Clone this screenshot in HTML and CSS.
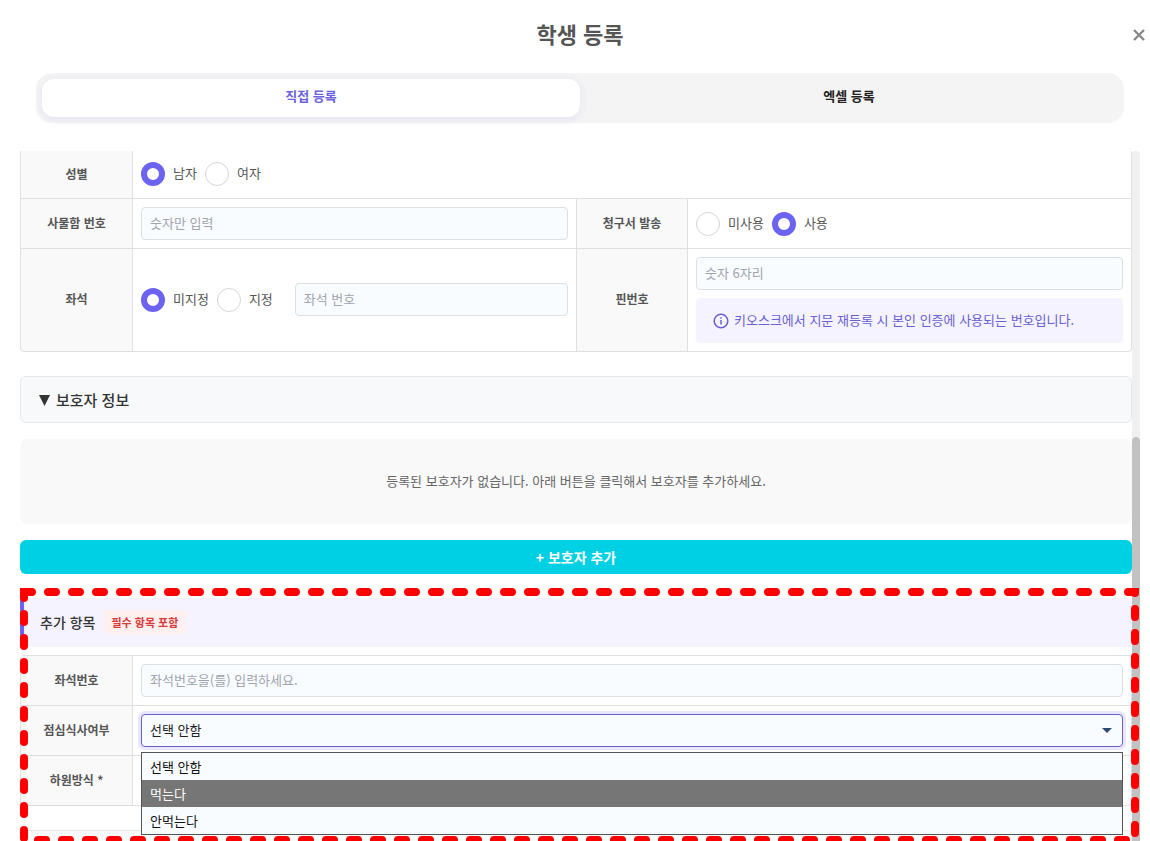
FILE: index.html
```html
<!DOCTYPE html>
<html lang="ko">
<head>
<meta charset="utf-8">
<meta name="viewport" content="width=device-width, initial-scale=1">
<title>학생 등록</title>
<link rel="stylesheet" href="styles.css">
</head>
<body>
<main class="modal">
  <header class="modal-header">
    <h1 class="modal-title">학생 등록</h1>
    <button class="close" type="button" aria-label="닫기">
      <svg width="12" height="12" viewBox="0 0 12 12"><path d="M1 1L11 11M11 1L1 11" stroke="#888" stroke-width="2.4" fill="none"/></svg>
    </button>
  </header>
  <div class="tabs" role="tablist">
    <button class="tab tab-active" type="button" role="tab" aria-selected="true">직접 등록</button>
    <button class="tab" type="button" role="tab" aria-selected="false">엑셀 등록</button>
  </div>
  <div class="scroll-area">
    <form class="content">
      <table class="form-table form-table-continued">
        <colgroup><col class="col-label"><col><col class="col-label-inner"><col></colgroup>
        <tr class="first-row">
          <th scope="row">성별</th>
          <td colspan="3">
            <div class="choices">
              <label class="choice"><input type="radio" name="gender" checked><span>남자</span></label>
              <label class="choice"><input type="radio" name="gender"><span>여자</span></label>
            </div>
          </td>
        </tr>
        <tr>
          <th scope="row"><label for="locker">사물함 번호</label></th>
          <td><input class="field" id="locker" type="text" placeholder="숫자만 입력"></td>
          <th scope="row">청구서 발송</th>
          <td>
            <div class="choices">
              <label class="choice"><input type="radio" name="bill"><span>미사용</span></label>
              <label class="choice"><input type="radio" name="bill" checked><span>사용</span></label>
            </div>
          </td>
        </tr>
        <tr>
          <th scope="row">좌석</th>
          <td>
            <div class="seat">
              <div class="choices">
                <label class="choice"><input type="radio" name="seat" checked><span>미지정</span></label>
                <label class="choice"><input type="radio" name="seat"><span>지정</span></label>
              </div>
              <input class="field" type="text" placeholder="좌석 번호" aria-label="좌석 번호">
            </div>
          </td>
          <th scope="row"><label for="pin">핀번호</label></th>
          <td>
            <input class="field" id="pin" type="text" placeholder="숫자 6자리">
            <p class="hint">
              <svg width="16" height="16" viewBox="0 0 16 16" fill="none" stroke="#6a5fd4" stroke-width="1.5"><circle cx="8" cy="8" r="6.8"/><path d="M8 7V11.6M8 4.2V5.8"/></svg>
              <span>키오스크에서 지문 재등록 시 본인 인증에 사용되는 번호입니다.</span>
            </p>
          </td>
        </tr>
      </table>

      <button class="section-toggle" type="button">
        <svg width="11" height="12" viewBox="0 0 11 12"><path d="M0 1H11L5.500 12Z" fill="#333"/></svg>
        보호자 정보
      </button>
      <p class="empty">등록된 보호자가 없습니다. 아래 버튼을 클릭해서 보호자를 추가하세요.</p>
      <button class="add" type="button">+ 보호자 추가</button>

      <section class="extra">
        <div class="extra-header">
          <h2 class="extra-title">추가 항목</h2>
          <span class="badge">필수 항목 포함</span>
        </div>
        <table class="form-table">
          <colgroup><col class="col-label"><col></colgroup>
          <tr>
            <th scope="row"><label for="seat-no">좌석번호</label></th>
            <td><input class="field" id="seat-no" type="text" placeholder="좌석번호을(를) 입력하세요."></td>
          </tr>
          <tr>
            <th scope="row"><label for="lunch">점심식사여부</label></th>
            <td>
              <div class="select-wrap">
                <select class="field select" id="lunch">
                  <option>선택 안함</option>
                  <option>먹는다</option>
                  <option>안먹는다</option>
                </select>
                <svg class="caret" width="10" height="5" viewBox="0 0 10 5"><path d="M0 0H10L5 5Z" fill="#2f4a73"/></svg>
                <ul class="menu" role="listbox" aria-label="점심식사여부">
                  <li role="option" aria-selected="false">선택 안함</li>
                  <li class="menu-active" role="option" aria-selected="true">먹는다</li>
                  <li role="option" aria-selected="false">안먹는다</li>
                </ul>
              </div>
            </td>
          </tr>
          <tr>
            <th scope="row">하원방식 *</th>
            <td></td>
          </tr>
        </table>
        <svg class="highlight" aria-hidden="true"><rect x="4" y="4"/></svg>
      </section>
      <div class="next-section"></div>
    </form>
    <div class="scrollbar"><div class="thumb"></div></div>
  </div>
</main>
</body>
</html>
```
FILE: styles.css
```css
* {
  box-sizing: border-box;
}

body {
  margin: 0;
  background: #fff;
  color: #555;
  font-family: "Noto Sans CJK KR", sans-serif;
  font-size: 13px;
  line-height: 20px;
}

button,
input,
select {
  font: inherit;
}

.modal {
  display: flex;
  flex-direction: column;
  height: 100vh;
  padding: 0 10px 0 20px;
  overflow: hidden;
}

.modal-header {
  position: relative;
  flex: none;
  padding: 17px 0 24px;
}

.modal-title {
  margin: 0;
  font-size: 22px;
  line-height: 32px;
  font-weight: 700;
  text-align: center;
}

.close {
  position: absolute;
  top: 23px;
  right: -11px;
  display: grid;
  place-items: center;
  width: 24px;
  height: 24px;
  padding: 0;
  border: 0;
  background: none;
}

.tabs {
  display: flex;
  flex: none;
  margin: 0 16px 28px;
  padding: 6px;
  border-radius: 16px;
  background: #f4f4f4;
}

.tab {
  flex: 1;
  height: 38px;
  padding: 0 0 4px;
  border: 0;
  border-radius: 12px;
  background: none;
  color: #222;
  font-weight: 700;
}

.tab-active {
  background: #fff;
  box-shadow: 0 2px 8px rgba(108, 95, 240, 0.12);
  color: #6c5fe0;
}

.scroll-area {
  display: flex;
  flex: 1;
  min-height: 0;
}

.content {
  flex: 1;
  min-width: 0;
}

.scrollbar {
  width: 8px;
  padding-top: 286px;
  border-radius: 4px 4px 0 0;
  background: #f0f0f0;
}

.thumb {
  height: 100%;
  border-radius: 4px 4px 0 0;
  background: #c2c2c2;
}

.form-table {
  width: 100%;
  border: 1px solid #e0e0e0;
  border-right: 0;
  border-bottom: 0;
  border-radius: 4px;
  border-spacing: 0;
  table-layout: fixed;
}

.form-table-continued {
  border-top: 0;
  border-radius: 0 0 4px 4px;
}

.col-label {
  width: 112px;
}

.col-label-inner {
  width: 111px;
}

.form-table th,
.form-table td {
  height: 50px;
  padding: 8px;
  border-right: 1px solid #e0e0e0;
  border-bottom: 1px solid #e0e0e0;
}

.form-table th {
  padding-bottom: 10px;
  background: #f9f9f9;
  font-size: 12px;
  font-weight: 700;
}

.form-table .first-row th,
.form-table .first-row td {
  height: 48px;
  padding: 6px 8px 8px;
}

.form-table tr:last-child th:first-child {
  border-bottom-left-radius: 4px;
}

.form-table tr:last-child td:last-child {
  border-bottom-right-radius: 4px;
}

.field {
  display: block;
  width: 100%;
  min-width: 0;
  height: 33px;
  padding: 0 8px 2px;
  border: 1px solid #dcdfe3;
  border-radius: 4px;
  background: #f9fcff;
  color: #222;
}

.field::placeholder {
  color: #a0a4ae;
  opacity: 1;
}

.choices,
.choice {
  display: flex;
  align-items: center;
  gap: 8px;
  white-space: nowrap;
}

.choice span {
  padding-bottom: 2px;
}

.choice input {
  appearance: none;
  width: 24px;
  height: 24px;
  margin: 0;
  border: 1px solid #d5d5d5;
  border-radius: 50%;
  background: #fff;
}

.choice input:checked {
  border: 6px solid #6c63f0;
}

.seat {
  display: flex;
  gap: 22px;
  height: 34px;
}

.hint {
  display: flex;
  align-items: center;
  gap: 5px;
  height: 45px;
  margin: 8px 0 0;
  padding: 0 17px;
  border-radius: 4px;
  background: #f4f3ff;
  color: #6a5fd4;
}

.hint svg {
  flex: none;
}

.hint span {
  padding-bottom: 2px;
}

.section-toggle {
  display: flex;
  align-items: center;
  gap: 6px;
  width: 100%;
  height: 47px;
  margin-top: 24px;
  padding: 0 18px;
  border: 1px solid #e5e8eb;
  border-radius: 6px;
  background: #f8f9fb;
  color: #333;
  font-size: 15px;
  font-weight: 500;
}

.empty {
  margin: 16px 0;
  padding: 32px 32px 33px;
  border-radius: 8px;
  background: #f9f9f9;
  color: #666;
  text-align: center;
}

.add {
  display: block;
  width: 100%;
  height: 34px;
  padding: 0;
  border: 0;
  border-radius: 6px;
  background: #00d0e4;
  color: #fff;
  font-size: 14px;
  font-weight: 700;
}

.extra {
  position: relative;
  margin: 24px 0;
}

.extra-header {
  display: flex;
  align-items: center;
  gap: 8px;
  height: 49px;
  margin-bottom: 8px;
  padding: 0 16px 2px;
  border-left: 4px solid #6c63f0;
  border-radius: 4px;
  background: #f4f3ff;
}

.extra-title {
  margin: 0;
  color: #333;
  font-size: 14px;
  font-weight: 500;
}

.badge {
  padding: 2px 8px;
  border-radius: 4px;
  background: #fff0f0;
  color: #d63a3a;
  font-size: 11px;
  font-weight: 700;
}

.select-wrap {
  position: relative;
}

.select {
  appearance: none;
  border-color: #6c5fc9;
  box-shadow: 0 0 0 3px #e9e7fd;
}

.caret {
  position: absolute;
  top: 14px;
  right: 11px;
}

.menu {
  position: absolute;
  top: 38px;
  left: 0;
  right: 0;
  margin: 0;
  padding: 0;
  border: 1px solid #555;
  background: #f9fcff;
  color: #111;
  list-style: none;
}

.menu li {
  padding: 0 8px;
  line-height: 27px;
}

.menu .menu-active {
  background: #767676;
  color: #fff;
}

.highlight {
  position: absolute;
  top: -10px;
  left: 0;
  width: calc(100% + 7px);
  height: 256px;
  pointer-events: none;
}

.highlight rect {
  width: calc(100% - 8px);
  height: calc(100% - 8px);
  fill: none;
  stroke: #f00;
  stroke-width: 8;
  stroke-linecap: round;
  stroke-dasharray: 8 16;
}

.next-section {
  height: 47px;
  border: 1px solid #e5e8eb;
  border-radius: 6px;
  background: #f8f9fb;
}
```
